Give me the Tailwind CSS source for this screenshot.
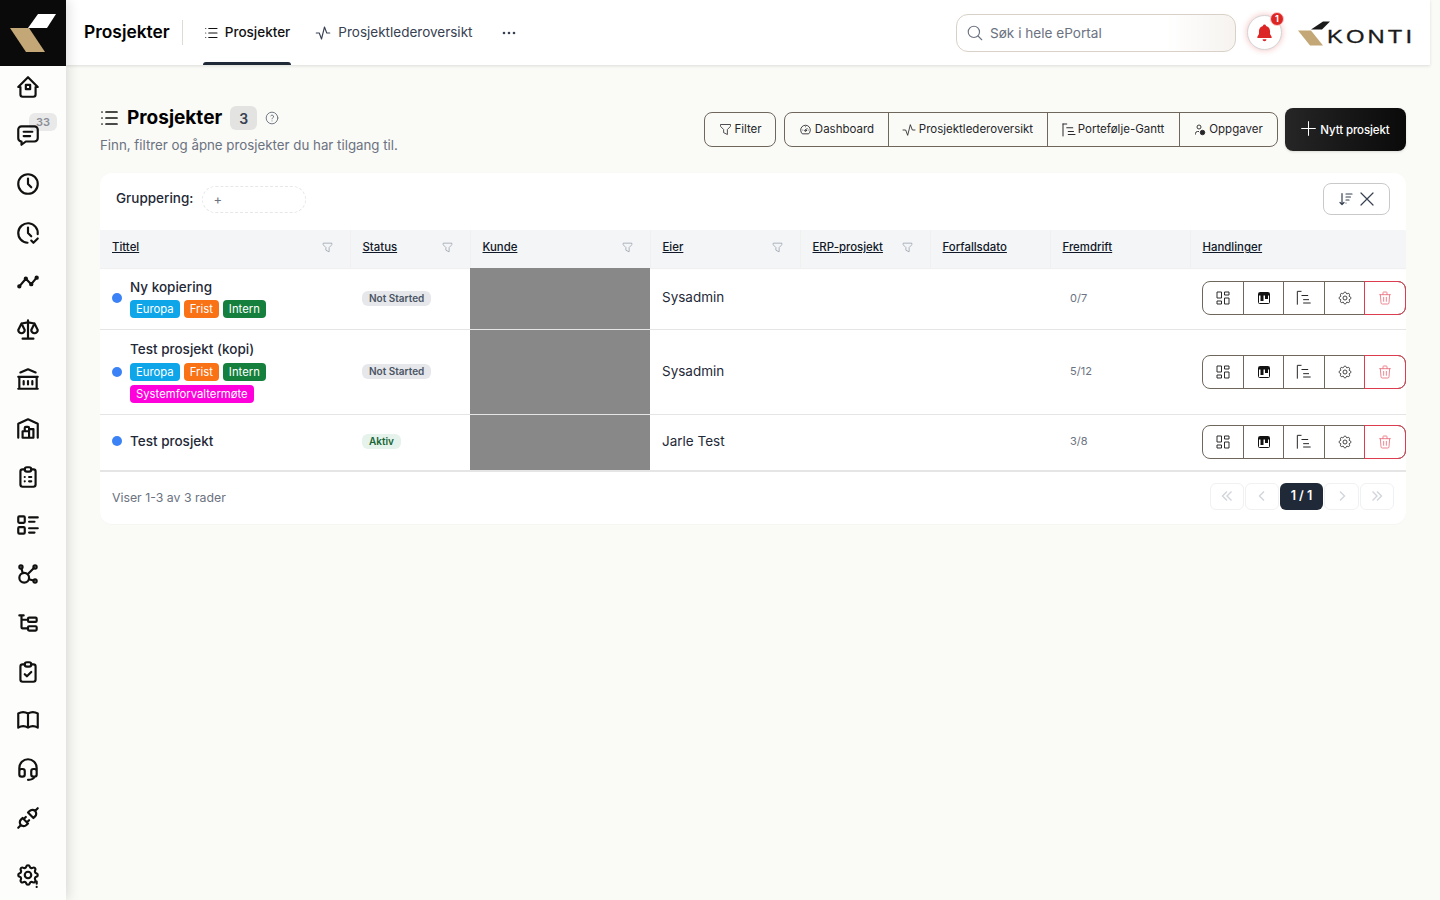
<!DOCTYPE html>
<html lang="no">
<head>
    <meta charset="UTF-8">
    <meta name="viewport" content="width=device-width, initial-scale=1.0">
    <title>Prosjekter</title>
    <script src="https://cdn.jsdelivr.net/npm/@tailwindcss/browser@4"></script>
</head>
<body class="bg-[#fafaf7] font-['Inter',sans-serif] text-[#111827] overflow-hidden">

    <!-- delte ikoner -->
    <svg class="hidden">
        <defs>
            <symbol id="i-list" viewBox="0 0 24 24"><path d="M9 6h11M9 12h11M9 18h11M5 6v.01M5 12v.01M5 18v.01"/></symbol>
            <symbol id="i-filter" viewBox="0 0 24 24"><path d="M4 4h16v2.2a2 2 0 0 1-.6 1.4L15 12v8l-6-3v-5L4.5 7.5A2 2 0 0 1 4 6.2z"/></symbol>
            <symbol id="i-pulse" viewBox="0 0 24 24"><path d="M3 12h4l3 8 4-16 3 8h4"/></symbol>
            <symbol id="i-dash" viewBox="0 0 24 24"><path d="M4 4h6v8H4zM4 16h6v4H4zM14 12h6v8h-6zM14 4h6v4h-6z"/></symbol>
            <symbol id="i-gantt" viewBox="0 0 24 24"><path d="M4 4v16M4 4h5M9 9h8M11 14h7M11 18h9"/></symbol>
            <symbol id="i-gear" viewBox="0 0 24 24"><path d="M10.325 4.317c.426-1.756 2.924-1.756 3.35 0a1.724 1.724 0 0 0 2.573 1.066c1.543-.94 3.31.826 2.37 2.37a1.724 1.724 0 0 0 1.065 2.572c1.756.426 1.756 2.924 0 3.35a1.724 1.724 0 0 0-1.066 2.573c.94 1.543-.826 3.31-2.37 2.37a1.724 1.724 0 0 0-2.572 1.065c-.426 1.756-2.924 1.756-3.35 0a1.724 1.724 0 0 0-2.573-1.066c-1.543.94-3.31-.826-2.37-2.37a1.724 1.724 0 0 0-1.065-2.572c-1.756-.426-1.756-2.924 0-3.35a1.724 1.724 0 0 0 1.066-2.573c-.94-1.543.826-3.31 2.37-2.37c1 .608 2.296.07 2.572-1.065z"/><circle cx="12" cy="12" r="3"/></symbol>
            <symbol id="i-trash" viewBox="0 0 24 24"><path d="M4 7h16M10 11v6M14 11v6M5 7l1 12a2 2 0 0 0 2 2h8a2 2 0 0 0 2-2l1-12M9 7V4a1 1 0 0 1 1-1h4a1 1 0 0 1 1 1v3"/></symbol>
            <symbol id="i-clip" viewBox="0 0 24 24"><path d="M9 5H7a2 2 0 0 0-2 2v12a2 2 0 0 0 2 2h10a2 2 0 0 0 2-2V7a2 2 0 0 0-2-2h-2"/><rect x="9" y="3" width="6" height="4" rx="2"/></symbol>
            <symbol id="i-kanban" viewBox="0 0 12 12"><rect x=".5" y=".5" width="11" height="11" rx="1" fill="#fff" stroke="#111"/><rect x="1" y="1" width="10" height="2.5" fill="#111"/><rect x="2.5" y="2" width="3" height="7" fill="#111"/><rect x="7" y="2" width="3" height="5" fill="#111"/></symbol>
        </defs>
    </svg>

    <div class="flex h-[900px]">
        <!-- sidebar -->
        <aside class="w-[66px] shrink-0 bg-[#fdfdfb] shadow-[2px_0_12px_rgba(0,0,0,0.14)] flex flex-col z-10">
            <div class="h-[66px] bg-[#0a0a0a] shrink-0">
                <svg width="66" height="66" viewBox="0 0 66 66"><polygon points="38,14 56,14 47,28 28,28" fill="#fff"/><polygon points="10,28 29,28 45,52 26,52" fill="#c4a777"/></svg>
            </div>
            <nav class="flex flex-col flex-1 gap-[22.75px] pt-[7.6px] pb-[12px] pl-[15px] text-[#111]">
                <svg class="w-[26px] h-[26px]" viewBox="0 0 24 24" fill="none" stroke="currentColor" stroke-width="2" stroke-linecap="round" stroke-linejoin="round"><path d="M5 12H3l9-9 9 9h-2M5 12v7a2 2 0 0 0 2 2h10a2 2 0 0 0 2-2v-7"/><rect x="10" y="10" width="4" height="4"/></svg>
                <div class="relative w-[26px] h-[26px]">
                    <span class="absolute left-[14px] -top-[9px] w-7 h-[18px] rounded-md bg-[#e9e9e9] text-[11px] font-semibold text-[#8b8f97] flex items-center justify-center">33</span>
                    <svg class="relative w-[26px] h-[26px]" viewBox="0 0 24 24" fill="none" stroke="currentColor" stroke-width="2" stroke-linecap="round" stroke-linejoin="round"><path d="M8 9h8M8 13h6M6 4h12a3 3 0 0 1 3 3v8a3 3 0 0 1-3 3H10l-4 3v-3a3 3 0 0 1-3-3V7a3 3 0 0 1 3-3z"/></svg>
                </div>
                <svg class="w-[26px] h-[26px]" viewBox="0 0 24 24" fill="none" stroke="currentColor" stroke-width="2" stroke-linecap="round" stroke-linejoin="round"><circle cx="12" cy="12" r="9"/><path d="M12 7v5l3 3"/></svg>
                <svg class="w-[26px] h-[26px]" viewBox="0 0 24 24" fill="none" stroke="currentColor" stroke-width="2" stroke-linecap="round" stroke-linejoin="round"><path d="M20.942 13.021a9 9 0 1 0-9.407 7.967M12 7v5l3 3M15 19l2 2 4-4"/></svg>
                <svg class="w-[26px] h-[26px]" viewBox="0 0 24 24" fill="none" stroke="currentColor" stroke-width="2" stroke-linecap="round" stroke-linejoin="round"><path d="M4 16l6-7 5 5 5-6"/><circle cx="15" cy="14" r="1"/><circle cx="10" cy="9" r="1"/><circle cx="4" cy="16" r="1"/><circle cx="20" cy="8" r="1"/></svg>
                <svg class="w-[26px] h-[26px]" viewBox="0 0 24 24" fill="none" stroke="currentColor" stroke-width="2" stroke-linecap="round" stroke-linejoin="round"><path d="M7 20h10M6 6l6-1 6 1M12 3v17M9 12L6 6l-3 6a3 3 0 0 0 6 0M21 12l-3-6-3 6a3 3 0 0 0 6 0"/></svg>
                <svg class="w-[26px] h-[26px]" viewBox="0 0 24 24" fill="none" stroke="currentColor" stroke-width="2" stroke-linecap="round" stroke-linejoin="round"><path d="M3 21h18M3 10h18M5 6l7-3 7 3M4 10v11M20 10v11M8 14v3M12 14v3M16 14v3"/></svg>
                <svg class="w-[26px] h-[26px]" viewBox="0 0 24 24" fill="none" stroke="currentColor" stroke-width="2" stroke-linecap="round" stroke-linejoin="round"><path d="M3 21V8l9-4 9 4v13M13 13h4v8H7v-6h6M13 21v-9a1 1 0 0 0-1-1h-2a1 1 0 0 0-1 1v3"/></svg>
                <svg class="w-[26px] h-[26px]" fill="none" stroke="currentColor" stroke-width="2" stroke-linecap="round" stroke-linejoin="round" viewBox="0 0 24 24"><use href="#i-clip"/><path d="M9 12v.01M13 12h2M9 16v.01M13 16h2"/></svg>
                <svg class="w-[26px] h-[26px]" viewBox="0 0 24 24" fill="none" stroke="currentColor" stroke-width="2" stroke-linecap="round" stroke-linejoin="round"><path d="M13 5h8M13 9h5M13 15h8M13 19h5"/><rect x="3" y="4" width="6" height="6" rx="1"/><rect x="3" y="14" width="6" height="6" rx="1"/></svg>
                <svg class="w-[26px] h-[26px]" viewBox="0 0 24 24" fill="none" stroke="currentColor" stroke-width="2" stroke-linecap="round" stroke-linejoin="round"><path d="M5.931 6.936l1.275 4.249M12.813 16.794l4.251 1.275M11.683 12.317l5.759-5.759"/><circle cx="5.5" cy="5.5" r="1.5"/><circle cx="18.5" cy="5.5" r="1.5"/><circle cx="18.5" cy="18.5" r="1.5"/><circle cx="8.5" cy="15.5" r="4.5"/></svg>
                <svg class="w-[26px] h-[26px]" viewBox="0 0 24 24" fill="none" stroke="currentColor" stroke-width="2" stroke-linecap="round" stroke-linejoin="round"><path d="M6 9h6M4 5h4M6 5v11a1 1 0 0 0 1 1h5"/><rect x="12" y="7" width="8" height="4" rx="1"/><rect x="12" y="15" width="8" height="4" rx="1"/></svg>
                <svg class="w-[26px] h-[26px]" fill="none" stroke="currentColor" stroke-width="2" stroke-linecap="round" stroke-linejoin="round" viewBox="0 0 24 24"><use href="#i-clip"/><path d="M9 14l2 2 4-4"/></svg>
                <svg class="w-[26px] h-[26px]" viewBox="0 0 24 24" fill="none" stroke="currentColor" stroke-width="2" stroke-linecap="round" stroke-linejoin="round"><path d="M3 19a9 9 0 0 1 9 0 9 9 0 0 1 9 0M3 6a9 9 0 0 1 9 0 9 9 0 0 1 9 0M3 6v13M12 6v13M21 6v13"/></svg>
                <svg class="w-[26px] h-[26px]" viewBox="0 0 24 24" fill="none" stroke="currentColor" stroke-width="2" stroke-linecap="round" stroke-linejoin="round"><path d="M4 14v-3a8 8 0 1 1 16 0v3M18 19c0 1.657-2.686 3-6 3M4 14a2 2 0 0 1 2-2h1a2 2 0 0 1 2 2v3a2 2 0 0 1-2 2H6a2 2 0 0 1-2-2zM15 14a2 2 0 0 1 2-2h1a2 2 0 0 1 2 2v3a2 2 0 0 1-2 2h-1a2 2 0 0 1-2-2z"/></svg>
                <svg class="w-[26px] h-[26px]" viewBox="0 0 24 24" fill="none" stroke="currentColor" stroke-width="2" stroke-linecap="round" stroke-linejoin="round"><path d="M7 12l5 5-1.5 1.5a3.536 3.536 0 1 1-5-5zM17 12l-5-5 1.5-1.5a3.536 3.536 0 1 1 5 5zM3 21l2.5-2.5M18.5 5.5L21 3M10 11l-2 2M13 14l-2 2"/></svg>
                <svg class="mt-auto w-[26px] h-[26px]" fill="none" stroke="currentColor" stroke-width="2" stroke-linecap="round" stroke-linejoin="round" viewBox="0 0 24 24"><use href="#i-gear"/><path d="M20 18v2M20 23v.01"/></svg>
            </nav>
        </aside>

        <div class="flex-1 min-w-0 flex flex-col">
            <!-- topbar -->
            <header class="h-[65px] mr-[10px] bg-white shadow-[0_1px_3px_rgba(0,0,0,0.12)] flex items-center pl-[18px] pr-[17px] shrink-0">
                <span class="text-[17.4px] font-semibold text-black">Prosjekter</span>
                <span class="w-px h-[25px] bg-[#dedbd3] ml-3 mr-5"></span>
                <div class="relative h-full flex items-center gap-[5px] pr-px text-[13.5px] font-medium text-[#111]">
                    <svg class="-ml-px w-[18px] h-[18px]" fill="none" stroke="currentColor" stroke-width="1.5" stroke-linecap="round"><use href="#i-list"/></svg>
                    <span>Prosjekter</span>
                    <span class="absolute left-0 right-0 bottom-0 h-[3px] rounded-t-sm bg-[#1f2937]"></span>
                </div>
                <div class="ml-[23px] flex items-center gap-[6px] text-[13.5px] text-[#374151]">
                    <svg class="w-[18px] h-[18px]" fill="none" stroke="currentColor" stroke-width="1.5" stroke-linecap="round" stroke-linejoin="round"><use href="#i-pulse"/></svg>
                    <span>Prosjektlederoversikt</span>
                </div>
                <svg class="ml-[28px] w-[18px] h-[18px] text-[#374151]" viewBox="0 0 18 18" fill="currentColor"><circle cx="4" cy="9" r="1.3"/><circle cx="9" cy="9" r="1.3"/><circle cx="14" cy="9" r="1.3"/></svg>

                <div class="ml-auto w-[280px] h-[38px] rounded-xl border border-[#d9d1c7] bg-gradient-to-r from-white from-75% to-[#f6f3ef] flex items-center pl-[9px] pt-px gap-[6px] text-[13.6px] text-[#6b7280]">
                    <svg class="-mt-px w-[18px] h-[18px]" viewBox="0 0 24 24" fill="none" stroke="currentColor" stroke-width="1.5" stroke-linecap="round"><circle cx="10.5" cy="10.5" r="7.5"/><path d="M21 21l-5-5"/></svg>
                    <span>Søk i hele ePortal</span>
                </div>
                <div class="relative ml-[11px] w-[35px] h-[35px] rounded-full border border-[#d4d4d4] bg-white shadow-[0_0_6px_rgba(220,38,38,0.3)] flex items-center justify-center">
                    <svg class="w-[19px] h-[19px] text-[#dc2626]" viewBox="0 0 24 24" fill="currentColor"><path d="M12 2a2 2 0 0 1 2 1.7A7 7 0 0 1 19 10v4l2 3.5a1 1 0 0 1-.9 1.5H3.9a1 1 0 0 1-.9-1.5L5 14v-4a7 7 0 0 1 5-6.3A2 2 0 0 1 12 2zM9.5 20.5h5a2.5 2.5 0 0 1-5 0z"/></svg>
                    <span class="absolute -top-[4px] -right-[3px] w-[14px] h-[14px] rounded-full bg-[#dc2626] border border-[#fecaca] text-white text-[9px] font-bold flex items-center justify-center">1</span>
                </div>
                <div class="ml-[16px] mt-[5px] w-[115px] h-[30px] relative shrink-0">
                    <svg class="absolute left-0 top-0" width="40" height="30" viewBox="0 0 40 30"><polygon points="0,10.5 13,10.5 25,25.5 12,25.5" fill="#c4a777"/><polygon points="25,1.5 32,1.5 24,9.5 13,9.5" fill="#1a1a1a"/></svg>
                    <span class="absolute left-[29px] top-[7px] origin-left scale-x-125 font-['Liberation_Sans',sans-serif] text-[19px] leading-[20px] tracking-[2.5px] text-[#1a1a1a] [-webkit-text-stroke:0.3px_#1a1a1a]">KONTI</span>
                </div>
            </header>

            <main class="flex-1 pl-[34px] pr-[34px] pt-[41px]">
                <div class="flex items-start justify-between h-[67px]">
                    <div>
                        <div class="flex items-center h-6 -ml-[3px]">
                            <svg class="w-6 h-6" fill="none" stroke="#111" stroke-width="1.7" stroke-linecap="round"><use href="#i-list"/></svg>
                            <h1 class="ml-[6px] text-[19px] font-bold text-black">Prosjekter</h1>
                            <span class="ml-2 w-[27px] h-6 rounded-md bg-[#e3e3e1] text-[14px] font-semibold text-[#374151] flex items-center justify-center">3</span>
                            <svg class="ml-2 w-[14px] h-[14px] text-[#6b7280]" viewBox="0 0 24 24" fill="none" stroke="currentColor" stroke-width="1.6" stroke-linecap="round"><circle cx="12" cy="12" r="10"/><path d="M12 17v.01M12 13.5a1.5 1.5 0 0 1 1-1.5 2.6 2.6 0 1 0-3-4"/></svg>
                        </div>
                        <p class="mt-[6px] text-[13.3px] text-[#6b7280]">Finn, filtrer og åpne prosjekter du har tilgang til.</p>
                    </div>
                    <div class="flex items-start gap-2 text-[11.5px] text-[#27272a]">
                        <button class="mt-[6px] w-[72px] h-[35px] rounded-lg border border-[#6f675c] flex items-center justify-center gap-px">
                            <svg class="w-[15px] h-[15px]" fill="none" stroke="currentColor" stroke-width="1.3" stroke-linejoin="round"><use href="#i-filter"/></svg>Filter
                        </button>
                        <div class="mt-[6px] h-[35px] w-[494px] rounded-lg border border-[#6f675c] flex divide-x divide-[#6f675c]">
                            <div class="w-[104px] flex items-center justify-center gap-[3px]">
                                <svg class="w-[13px] h-[13px]" viewBox="0 0 24 24" fill="none" stroke="currentColor" stroke-width="1.6" stroke-linecap="round"><path d="M5.6 19.5a9 9 0 1 1 12.8 0zM12 13l3-3M7 13v.01M17 13v.01M12 7v.01"/><circle cx="12" cy="14" r="1.5"/></svg>Dashboard
                            </div>
                            <div class="w-[159px] flex items-center justify-center gap-[2px] pr-[2px]">
                                <svg class="w-[16px] h-[16px]" fill="none" stroke="currentColor" stroke-width="1.3" stroke-linecap="round" stroke-linejoin="round"><use href="#i-pulse"/></svg>Prosjektlederoversikt
                            </div>
                            <div class="w-[132px] flex items-center justify-center pr-[3px]">
                                <svg class="w-[18px] h-[18px]" fill="none" stroke="currentColor" stroke-width="1.3" stroke-linecap="round"><use href="#i-gantt"/></svg>Portefølje-Gantt
                            </div>
                            <div class="flex-1 flex items-center justify-center gap-[3px]">
                                <svg class="w-[12px] h-[12px]" viewBox="0 0 24 24" fill="none" stroke="currentColor" stroke-width="1.8"><circle cx="10" cy="6" r="4"/><path d="M3 21v-2a4 4 0 0 1 4-4h3"/><circle cx="17" cy="17" r="4.5" fill="currentColor"/></svg>Oppgaver
                            </div>
                        </div>
                        <button class="mt-[2px] -ml-[1px] w-[121px] h-[43px] rounded-lg bg-gradient-to-r from-[#262626] to-[#0a0a0a] text-white font-medium flex items-center justify-center gap-[4px] tracking-[-0.1px] shadow-sm">
                            <svg class="-mt-[3px] w-[15px] h-[15px]" viewBox="0 0 24 24" fill="none" stroke="currentColor" stroke-width="1.6" stroke-linecap="round"><path d="M12 1v22M1 12h22"/></svg><span class="mt-[3px]">Nytt prosjekt</span>
                        </button>
                    </div>
                </div>

                <section class="bg-white rounded-xl h-[351px] shadow-[0_1px_1px_rgba(0,0,0,0.02)] overflow-hidden">
                    <div class="h-[57px] flex items-center pl-4 pr-4 pb-[7px]">
                        <span class="text-[13.5px] font-medium text-[#1f2937]">Gruppering:</span>
                        <span class="ml-[9px] mt-[3px] w-[104px] h-[27px] rounded-full border border-dashed border-[#e5e7eb] pl-[10px] flex items-center text-[13px] text-[#6b7280]">+</span>
                        <button class="ml-auto mt-px w-[67px] h-[32px] rounded-lg border border-[#c9c9c9] flex items-center justify-center gap-[5px]">
                            <svg class="w-[16px] h-[16px]" viewBox="0 0 16 16" fill="none" stroke="#374151" stroke-width="1.2" stroke-linecap="round" stroke-linejoin="round"><path d="M4 2.5v11M2 11.5l2 2 2-2M8 3h6M8 6h4.5M8 9h3M8 12v.01"/></svg>
                            <svg class="w-[16px] h-[16px]" viewBox="0 0 16 16" fill="none" stroke="#374151" stroke-width="1.2" stroke-linecap="round"><path d="M2 2l12 12M14 2L2 14"/></svg>
                        </button>
                    </div>
                    <table class="w-full table-fixed text-left">
                        <colgroup>
                            <col class="w-[250px]"><col class="w-[120px]"><col class="w-[180px]"><col class="w-[150px]"><col class="w-[130px]"><col class="w-[120px]"><col class="w-[140px]"><col>
                        </colgroup>
                        <thead>
                            <tr class="h-[38px] bg-[#f4f5f7] text-[11.4px] text-[#111827] shadow-[0_1px_1px_rgba(0,0,0,0.06)]">
                                <th class="pl-3 pb-[2px] font-medium border-r border-[#f0f0f0]"><div class="flex items-center justify-between pr-[16px]"><span class="underline">Tittel</span><svg class="w-[13px] h-[13px] text-[#9ca3af]" fill="none" stroke="currentColor" stroke-width="1.5" stroke-linejoin="round"><use href="#i-filter"/></svg></div></th>
                                <th class="pl-3 pb-[2px] font-medium border-r border-[#f0f0f0]"><div class="flex items-center justify-between pr-[16px]"><span class="underline">Status</span><svg class="w-[13px] h-[13px] text-[#9ca3af]" fill="none" stroke="currentColor" stroke-width="1.5" stroke-linejoin="round"><use href="#i-filter"/></svg></div></th>
                                <th class="pl-3 pb-[2px] font-medium border-r border-[#f0f0f0]"><div class="flex items-center justify-between pr-[16px]"><span class="underline">Kunde</span><svg class="w-[13px] h-[13px] text-[#9ca3af]" fill="none" stroke="currentColor" stroke-width="1.5" stroke-linejoin="round"><use href="#i-filter"/></svg></div></th>
                                <th class="pl-3 pb-[2px] font-medium border-r border-[#f0f0f0]"><div class="flex items-center justify-between pr-[16px]"><span class="underline">Eier</span><svg class="w-[13px] h-[13px] text-[#9ca3af]" fill="none" stroke="currentColor" stroke-width="1.5" stroke-linejoin="round"><use href="#i-filter"/></svg></div></th>
                                <th class="pl-3 pb-[2px] font-medium border-r border-[#f0f0f0]"><div class="flex items-center justify-between pr-[16px]"><span class="underline">ERP-prosjekt</span><svg class="w-[13px] h-[13px] text-[#9ca3af]" fill="none" stroke="currentColor" stroke-width="1.5" stroke-linejoin="round"><use href="#i-filter"/></svg></div></th>
                                <th class="pl-3 pb-[2px] font-medium border-r border-[#f0f0f0]"><span class="underline">Forfallsdato</span></th>
                                <th class="pl-3 pb-[2px] font-medium border-r border-[#f0f0f0]"><span class="underline">Fremdrift</span></th>
                                <th class="pl-3 pb-[2px] font-medium"><span class="underline">Handlinger</span></th>
                            </tr>
                        </thead>
                        <tbody class="text-[13.5px] text-[#1f2937]">
                            <tr class="h-[61px] border-b border-[#e5e5e5]">
                                <td class="pl-3">
                                    <div class="flex items-center gap-2">
                                        <span class="w-[10px] h-[10px] rounded-full bg-[#3b82f6] shrink-0"></span>
                                        <div>
                                            <div class="font-medium leading-[16px]">Ny kopiering</div>
                                            <div class="mt-[5px] flex flex-wrap gap-1 text-[11.3px] text-white leading-[18px]">
                                                <span class="px-1.5 rounded-sm bg-[#0ea5e9]">Europa</span><span class="px-1.5 rounded-sm bg-[#f97316]">Frist</span><span class="px-1.5 rounded-sm bg-[#15803d]">Intern</span>
                                            </div>
                                        </div>
                                    </div>
                                </td>
                                <td class="pl-3 pb-[3px]"><span class="inline-block px-[7px] rounded-md bg-[#e5e7eb] text-[10px] leading-[15px] font-semibold text-[#4b5563]">Not Started</span></td>
                                <td class="bg-[#888888]"></td>
                                <td class="pl-3 pb-[2px]">Sysadmin</td>
                                <td></td>
                                <td></td>
                                <td class="pl-[20px] pb-px text-[11px] text-[#6b7280]">0/7</td>
                                <td class="pl-3">
                                    <div class="w-[204px] h-[34px] flex rounded-lg border border-[#6f675c] divide-x divide-[#6f675c] text-[#27272a]">
                                        <div class="w-[41px] flex items-center justify-center"><svg class="w-[18px] h-[18px]" fill="none" stroke="currentColor" stroke-width="1.3"><use href="#i-dash"/></svg></div>
                                        <div class="w-[40px] flex items-center justify-center"><svg class="w-3 h-3"><use href="#i-kanban"/></svg></div>
                                        <div class="w-[41px] flex items-center justify-center"><svg class="w-5 h-5" fill="none" stroke="currentColor" stroke-width="1.2"><use href="#i-gantt"/></svg></div>
                                        <div class="w-[40px] flex items-center justify-center"><svg class="w-4 h-4" fill="none" stroke="currentColor" stroke-width="1.3"><use href="#i-gear"/></svg></div>
                                        <div class="flex-1 -m-px rounded-r-lg border border-[#dc3c4e] flex items-center justify-center"><svg class="w-4 h-4 text-[#e9737f]" fill="none" stroke="currentColor" stroke-width="1.3" stroke-linecap="round"><use href="#i-trash"/></svg></div>
                                    </div>
                                </td>
                            </tr>
                            <tr class="h-[85px] border-b border-[#e5e5e5]">
                                <td class="pl-3">
                                    <div class="flex items-center gap-2">
                                        <span class="w-[10px] h-[10px] rounded-full bg-[#3b82f6] shrink-0"></span>
                                        <div>
                                            <div class="font-medium leading-[16px]">Test prosjekt (kopi)</div>
                                            <div class="mt-[6px] flex flex-wrap gap-1 text-[11.3px] text-white leading-[18px]">
                                                <span class="px-1.5 rounded-sm bg-[#0ea5e9]">Europa</span><span class="px-1.5 rounded-sm bg-[#f97316]">Frist</span><span class="px-1.5 rounded-sm bg-[#15803d]">Intern</span><span class="px-1.5 rounded-sm bg-[#ff00dc]">Systemforvaltermøte</span>
                                            </div>
                                        </div>
                                    </div>
                                </td>
                                <td class="pl-3 pb-[2px]"><span class="inline-block px-[7px] rounded-md bg-[#e5e7eb] text-[10px] leading-[15px] font-semibold text-[#4b5563]">Not Started</span></td>
                                <td class="bg-[#888888]"></td>
                                <td class="pl-3">Sysadmin</td>
                                <td></td>
                                <td></td>
                                <td class="pl-[20px] text-[11px] text-[#6b7280]">5/12</td>
                                <td class="pl-3">
                                    <div class="w-[204px] h-[34px] flex rounded-lg border border-[#6f675c] divide-x divide-[#6f675c] text-[#27272a]">
                                        <div class="w-[41px] flex items-center justify-center"><svg class="w-[18px] h-[18px]" fill="none" stroke="currentColor" stroke-width="1.3"><use href="#i-dash"/></svg></div>
                                        <div class="w-[40px] flex items-center justify-center"><svg class="w-3 h-3"><use href="#i-kanban"/></svg></div>
                                        <div class="w-[41px] flex items-center justify-center"><svg class="w-5 h-5" fill="none" stroke="currentColor" stroke-width="1.2"><use href="#i-gantt"/></svg></div>
                                        <div class="w-[40px] flex items-center justify-center"><svg class="w-4 h-4" fill="none" stroke="currentColor" stroke-width="1.3"><use href="#i-gear"/></svg></div>
                                        <div class="flex-1 -m-px rounded-r-lg border border-[#dc3c4e] flex items-center justify-center"><svg class="w-4 h-4 text-[#e9737f]" fill="none" stroke="currentColor" stroke-width="1.3" stroke-linecap="round"><use href="#i-trash"/></svg></div>
                                    </div>
                                </td>
                            </tr>
                            <tr class="h-[57px] border-b-2 border-[#e5e5e5]">
                                <td class="pl-3 pb-[2px]">
                                    <div class="flex items-center gap-2">
                                        <span class="w-[10px] h-[10px] rounded-full bg-[#3b82f6] shrink-0"></span>
                                        <div class="font-medium">Test prosjekt</div>
                                    </div>
                                </td>
                                <td class="pl-3 pb-[4px]"><span class="inline-block px-[7px] rounded-md bg-[#e6f2ec] text-[10px] leading-[15px] font-semibold text-[#166534]">Aktiv</span></td>
                                <td class="bg-[#888888]"></td>
                                <td class="pl-3 pb-[2px]">Jarle Test</td>
                                <td></td>
                                <td></td>
                                <td class="pl-[20px] pb-[2px] text-[11px] text-[#6b7280]">3/8</td>
                                <td class="pl-3">
                                    <div class="w-[204px] h-[34px] flex rounded-lg border border-[#6f675c] divide-x divide-[#6f675c] text-[#27272a]">
                                        <div class="w-[41px] flex items-center justify-center"><svg class="w-[18px] h-[18px]" fill="none" stroke="currentColor" stroke-width="1.3"><use href="#i-dash"/></svg></div>
                                        <div class="w-[40px] flex items-center justify-center"><svg class="w-3 h-3"><use href="#i-kanban"/></svg></div>
                                        <div class="w-[41px] flex items-center justify-center"><svg class="w-5 h-5" fill="none" stroke="currentColor" stroke-width="1.2"><use href="#i-gantt"/></svg></div>
                                        <div class="w-[40px] flex items-center justify-center"><svg class="w-4 h-4" fill="none" stroke="currentColor" stroke-width="1.3"><use href="#i-gear"/></svg></div>
                                        <div class="flex-1 -m-px rounded-r-lg border border-[#dc3c4e] flex items-center justify-center"><svg class="w-4 h-4 text-[#e9737f]" fill="none" stroke="currentColor" stroke-width="1.3" stroke-linecap="round"><use href="#i-trash"/></svg></div>
                                    </div>
                                </td>
                            </tr>
                        </tbody>
                    </table>
                    <div class="h-[52px] flex items-center pl-3 pr-3">
                        <span class="text-[12.3px] text-[#6b7280]">Viser 1-3 av 3 rader</span>
                        <div class="ml-auto -mt-[4px] flex gap-px text-[#d1d5db]">
                            <span class="w-[34px] h-[27px] rounded-md border border-[#f0f1f3] flex items-center justify-center"><svg class="w-3 h-3" viewBox="0 0 12 12" fill="none" stroke="currentColor" stroke-width="1.4"><path d="M6 1.5L1.5 6 6 10.5M10.5 1.5L6 6l4.5 4.5"/></svg></span>
                            <span class="w-[34px] h-[27px] rounded-md border border-[#f0f1f3] flex items-center justify-center"><svg class="w-3 h-3" viewBox="0 0 12 12" fill="none" stroke="currentColor" stroke-width="1.4"><path d="M8 1.5L3.5 6 8 10.5"/></svg></span>
                            <span class="w-[43px] h-[27px] rounded-md bg-[#1f2937] text-white text-[12.5px] font-semibold flex items-center justify-center">1 / 1</span>
                            <span class="w-[35px] h-[27px] rounded-md border border-[#f0f1f3] flex items-center justify-center"><svg class="w-3 h-3" viewBox="0 0 12 12" fill="none" stroke="currentColor" stroke-width="1.4"><path d="M4 1.5L8.5 6 4 10.5"/></svg></span>
                            <span class="w-[34px] h-[27px] rounded-md border border-[#f0f1f3] flex items-center justify-center"><svg class="w-3 h-3" viewBox="0 0 12 12" fill="none" stroke="currentColor" stroke-width="1.4"><path d="M1.5 1.5L6 6l-4.5 4.5M6 1.5L10.5 6 6 10.5"/></svg></span>
                        </div>
                    </div>
                </section>
            </main>
        </div>
    </div>
</body>
</html>
